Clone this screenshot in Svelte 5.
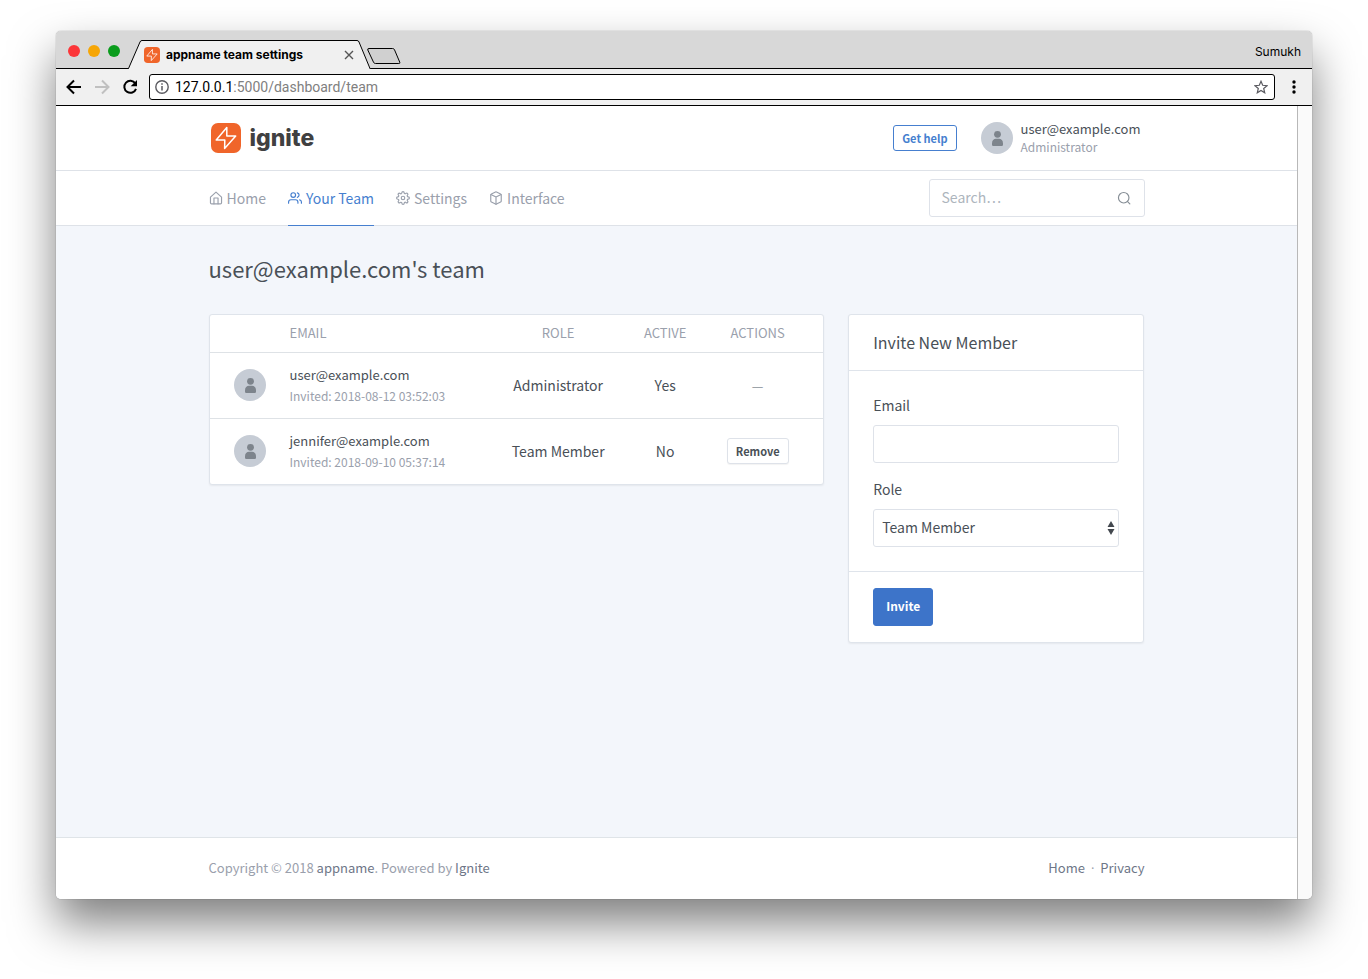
<script>
  const members = [
    { email: 'user@example.com', invited: '2018-08-12 03:52:03', role: 'Administrator', active: 'Yes', removable: false },
    { email: 'jennifer@example.com', invited: '2018-09-10 05:37:14', role: 'Team Member', active: 'No', removable: true }
  ];
  const nav = [
    { label: 'Home', icon: 'home' },
    { label: 'Your Team', icon: 'users', active: true },
    { label: 'Settings', icon: 'settings' },
    { label: 'Interface', icon: 'box' }
  ];
  let search = $state('');
  let email = $state('');
  let role = $state('Team Member');
</script>

{#snippet avatar()}
  <svg class="avatar" viewBox="0 0 32 32" aria-hidden="true">
    <circle cx="16" cy="16" r="16" fill="#c6ccd5" />
    <circle cx="16.5" cy="12.3" r="3.4" fill="#7d848c" />
    <path d="M11 21.500c0-3.200 1.800-4.700 4-4.700h3c2.200 0 4 1.500 4 4.700v1.300q0 1.300-1.300 1.300h-8.400q-1.300 0-1.300-1.300z" fill="#7d848c" />
  </svg>
{/snippet}

{#snippet logo(cls)}
  <svg class={cls} viewBox="0 0 30 30" aria-hidden="true">
    <rect width="30" height="30" rx="7" fill="#f0652a" />
    <path d="M15.800 4.500 5.200 17h8.600l-.2 8.500L24.700 13h-8.900z" fill="none" stroke="#fff" stroke-width="1.500" stroke-linejoin="round" />
  </svg>
{/snippet}

<div class="window">
  <div class="tabstrip">
    <div class="lights"><span class="red"></span><span class="amber"></span><span class="green"></span></div>
    <div class="tab">
      <svg class="tab-shape" viewBox="0 0 243 29" aria-hidden="true">
        <path d="M0 29 .500 28.500 12 2q.500-1.500 2-1.500H229q1.500 0 2 1.500l11 26.500.500.500" fill="#f0f0f0" stroke="#000" />
      </svg>
      {@render logo('favicon')}
      <span class="tab-title">appname team settings</span>
      <button class="tab-close" aria-label="Close tab">
        <svg width="10" height="10" viewBox="0 0 10 10"><path d="M1 1l8 8M9 1 1 9" stroke="#555" stroke-width="1.400" /></svg>
      </button>
    </div>
    <button class="new-tab" aria-label="New tab">
      <svg width="34" height="17" viewBox="0 0 34 17"><path d="M2 .500h23.500q1.500 0 2 1.300l5.300 12.500q.500 1.200-1 1.200H8.500q-1.500 0-2-1.300L.800 2Q.300.500 2 .500z" fill="#d0d0d0" stroke="#000" /></svg>
    </button>
    <span class="profile">Sumukh</span>
  </div>

  <div class="toolbar">
    <button aria-label="Back"><svg width="16" height="16" viewBox="0 0 16 16"><path d="M15 8H2M8 1.500 1.500 8 8 14.500" fill="none" stroke="#000" stroke-width="2" /></svg></button>
    <button aria-label="Forward"><svg width="16" height="16" viewBox="0 0 16 16"><path d="M1 8h13M8 1.500 14.500 8 8 14.500" fill="none" stroke="#c0c0c0" stroke-width="2" /></svg></button>
    <button aria-label="Reload"><svg width="16" height="16" viewBox="0 0 16 16"><path d="M13.300 4.400A6 6 0 1 0 14 9.800" fill="none" stroke="#000" stroke-width="2" /><path d="M15 1v6.300H8.700z" /></svg></button>
    <div class="address">
      <svg width="14" height="14" viewBox="0 0 14 14" aria-hidden="true"><circle cx="7" cy="7" r="6.200" fill="none" stroke="#5a5a60" stroke-width="1.400" /><path d="M7 6v4.500M7 3.300v1.500" stroke="#5a5a60" stroke-width="1.500" /></svg>
      <span class="url">127.0.0.1<span>:5000/dashboard/team</span></span>
      <svg width="14" height="14" viewBox="0 0 14 14" aria-hidden="true"><path d="M7 1.300l1.700 4 4.300.4-3.300 2.800 1 4.300L7 10.500l-3.700 2.300 1-4.300L1 5.700l4.300-.4z" fill="none" stroke="#5a5a60" stroke-width="1.200" /></svg>
    </div>
    <button aria-label="Menu"><svg width="4" height="14" viewBox="0 0 4 14"><circle cx="2" cy="2" r="1.700" /><circle cx="2" cy="7" r="1.700" /><circle cx="2" cy="12" r="1.700" /></svg></button>
  </div>

  <div class="viewport">
    <div class="page">
      <header class="bar top">
        <div class="container">
          <a class="brand" href="#home">{@render logo('brand-mark')}<span>ignite</span></a>
          <div class="account">
            <a class="btn small outline" href="#help">Get help</a>
            <a class="user" href="#account">
              {@render avatar()}
              <span class="user-text"><span>user@example.com</span><small>Administrator</small></span>
            </a>
          </div>
        </div>
      </header>

      <div class="bar menu">
        <div class="container">
          <nav>
            {#each nav as item}
              <a class:active={item.active} href="#{item.icon}">
                <svg class="icon" viewBox="0 0 24 24" aria-hidden="true">
                  {#if item.icon === 'home'}
                    <path d="M2.500 10.500 12 2l9.500 8.500V20a2 2 0 0 1-2 2h-15a2 2 0 0 1-2-2z" /><path d="M8.500 22V12h7v10" />
                  {:else if item.icon === 'users'}
                    <path d="M17 21v-2a4 4 0 0 0-4-4H5a4 4 0 0 0-4 4v2" /><circle cx="9" cy="7" r="4" /><path d="M23 21v-2a4 4 0 0 0-3-3.870M16 3.130a4 4 0 0 1 0 7.750" />
                  {:else if item.icon === 'settings'}
                    <circle cx="12" cy="12" r="3" /><path d="M19.400 15a1.650 1.650 0 0 0 .33 1.820l.06.06a2 2 0 0 1-2.830 2.830l-.06-.06a1.650 1.650 0 0 0-2.800 1.170V21a2 2 0 0 1-4 0v-.09A1.650 1.650 0 0 0 9 19.400a1.650 1.650 0 0 0-1.820.33l-.06.06a2 2 0 0 1-2.830-2.830l.06-.06a1.650 1.650 0 0 0-1.170-2.800H3a2 2 0 0 1 0-4h.09A1.650 1.650 0 0 0 4.600 9a1.650 1.650 0 0 0-.33-1.820l-.06-.06a2 2 0 0 1 2.830-2.830l.06.06A1.650 1.650 0 0 0 9 4.600 1.650 1.650 0 0 0 10 3.090V3a2 2 0 0 1 4 0v.09a1.650 1.650 0 0 0 2.820 1.170l.06-.06a2 2 0 0 1 2.830 2.830l-.06.06A1.650 1.650 0 0 0 19.400 9a1.650 1.650 0 0 0 1.510 1H21a2 2 0 0 1 0 4h-.09a1.650 1.650 0 0 0-1.510 1z" />
                  {:else}
                    <path d="M12.900 1.600l7 3.500A2 2 0 0 1 21 6.900v10.200a2 2 0 0 1-1.100 1.800l-7 3.500a2 2 0 0 1-1.800 0l-7-3.500A2 2 0 0 1 3 17.100V6.900a2 2 0 0 1 1.100-1.800l7-3.500a2 2 0 0 1 1.800 0z" /><path d="M3.300 6 12 10.400 20.700 6M12 22.500V10.400" />
                  {/if}
                </svg>
                {item.label}
              </a>
            {/each}
          </nav>
          <label class="search">
            <input type="search" placeholder="Search…" aria-label="Search" bind:value={search} />
            <svg class="icon" viewBox="0 0 24 24" aria-hidden="true"><circle cx="11.500" cy="11.500" r="9" /><path d="M22 22l-4.200-4.200" /></svg>
          </label>
        </div>
      </div>

      <main class="container">
        <h1>user@example.com's team</h1>
        <div class="columns">
          <section class="card">
            <table>
              <colgroup><col class="c-avatar" /><col /><col class="c-role" /><col class="c-active" /><col class="c-actions" /></colgroup>
              <thead>
                <tr><th></th><th class="left">Email</th><th>Role</th><th>Active</th><th>Actions</th></tr>
              </thead>
              <tbody>
                {#each members as m}
                  <tr>
                    <td>{@render avatar()}</td>
                    <td class="left"><div>{m.email}</div><small>Invited: {m.invited}</small></td>
                    <td>{m.role}</td>
                    <td>{m.active}</td>
                    <td>{#if m.removable}<button class="btn small plain">Remove</button>{:else}<span class="dash">—</span>{/if}</td>
                  </tr>
                {/each}
              </tbody>
            </table>
          </section>

          <form class="card invite" onsubmit={(e) => e.preventDefault()}>
            <h2>Invite New Member</h2>
            <div class="fields">
              <label for="email">Email</label>
              <input id="email" type="email" bind:value={email} />
              <label for="role">Role</label>
              <div class="select">
                <select id="role" bind:value={role}><option>Team Member</option><option>Administrator</option></select>
                <svg width="8" height="14" viewBox="0 0 8 14" aria-hidden="true"><path d="M4 0l3.500 6h-7zM4 14 .500 8h7z" fill="#43484f" /></svg>
              </div>
            </div>
            <div class="submit"><button class="btn primary">Invite</button></div>
          </form>
        </div>
      </main>

      <footer>
        <div class="container">
          <span>Copyright © 2018 <a href="#app">appname</a>. Powered by <a href="#ignite">Ignite</a></span>
          <span class="links"><a href="#home">Home</a><span class="dot">·</span><a href="#privacy">Privacy</a></span>
        </div>
      </footer>
    </div>
    <div class="scrollbar"></div>
  </div>
</div>

<style>
  :global(body) { background: #fff; }
  :global(#app) { overflow: hidden; }
  * { box-sizing: border-box; }
  a { color: inherit; text-decoration: none; }
  button { font: inherit; margin: 0; cursor: pointer; }
  svg { display: block; flex: none; }

  .window {
    display: flex;
    flex-direction: column;
    min-height: calc(100vh - 111px);
    margin: 31px 56px 80px;
    border-radius: 5px;
    overflow: hidden;
    background: #fff;
    box-shadow: 0 0 1px rgba(0, 0, 0, 0.6), 0 24px 46px rgba(0, 0, 0, 0.5);
    font: 14px/22px "Noto Sans CJK SC", "Open Sans", sans-serif;
    color: #495057;
  }

  .tabstrip {
    display: flex;
    align-items: flex-end;
    height: 38px;
    background: #d8d8d8;
    border-bottom: 1px solid #000;
    font-family: Inter, sans-serif;
    color: #000;
  }
  .lights { display: flex; gap: 8px; padding: 0 8px 11px 12px; }
  .lights span { width: 12px; height: 12px; border-radius: 50%; }
  .red { background: #fc3639; }
  .amber { background: #f6a606; }
  .green { background: #0a9c1c; }
  .tab {
    position: relative;
    display: flex;
    align-items: center;
    width: 243px;
    height: 29px;
    padding: 0 17px 0 16px;
    margin-bottom: -1px;
  }
  .tab-shape { position: absolute; inset: 0; width: 100%; height: 100%; }
  .favicon { position: relative; width: 16px; height: 16px; }
  .tab-title { position: relative; flex: 1; padding-left: 6px; font-size: 12px; font-weight: 700; white-space: nowrap; }
  .tab button, .new-tab, .toolbar button { border: 0; padding: 0; background: none; }
  .tab-close { position: relative; }
  .new-tab { margin: 0 0 3px -4px; }
  .profile { margin-left: auto; padding: 0 11px 5px; font-size: 12px; }

  .toolbar {
    display: flex;
    align-items: center;
    gap: 12px;
    height: 37px;
    padding: 0 16px 0 10px;
    background: #f0f0f0;
    border-bottom: 1px solid #000;
  }
  .address {
    flex: 1;
    display: flex;
    align-items: center;
    gap: 6px;
    height: 26px;
    margin: 0 5px 0 -1px;
    padding: 0 6px 0 5px;
    background: #fff;
    border: 1px solid #000;
    border-radius: 3px;
    font: 14px/22px Roboto, sans-serif;
    color: #000;
  }
  .url { flex: 1; }
  .url span { color: #808080; }

  .viewport { flex: 1; display: flex; }
  .page { flex: 1; display: flex; flex-direction: column; background: #f3f6fb; }
  .scrollbar { width: 15px; background: #fafafa; border-left: 1px solid #b8b8b8; }

  .container { width: 100%; max-width: 984px; margin: 0 auto; padding: 0 24px; }
  .bar { background: #fff; border-bottom: 1px solid #dee2e8; }
  .bar .container { display: flex; justify-content: space-between; align-items: center; }
  .top .container { height: 64px; }
  .menu .container { height: 54px; }

  .brand { display: flex; align-items: center; gap: 9px; padding-left: 2px; font: 800 23px/30px Inter, sans-serif; color: #404041; }
  .brand-mark { width: 30px; height: 30px; }
  .account { display: flex; align-items: center; gap: 24px; }
  .user { display: flex; align-items: center; gap: 8px; }
  .user-text { display: flex; flex-direction: column; min-width: 124px; font-size: 13px; line-height: 18px; }
  .avatar { width: 32px; height: 32px; }
  small { font-size: 12px; color: #9aa0ac; }

  nav { display: flex; gap: 22px; align-self: stretch; color: #9aa0ac; }
  nav a { display: flex; align-items: center; gap: 4px; margin-bottom: -1px; padding-bottom: 1px; border-bottom: 1px solid transparent; }
  nav a.active { color: #467fcf; border-color: #467fcf; }
  .icon { width: 14px; height: 14px; fill: none; stroke: currentColor; stroke-width: 2; stroke-linecap: round; stroke-linejoin: round; }

  input, select {
    width: 100%;
    height: 38px;
    margin: 0;
    border: 1px solid #dee2e9;
    border-radius: 3px;
    background: #fff;
    font: inherit;
    color: #495057;
    appearance: none;
    outline: none;
  }
  .search { display: grid; align-items: center; width: 216px; color: #868e96; }
  .search input, .search svg { grid-area: 1 / 1; }
  .search input { padding: 0 36px 2px 12px; }
  .search input::placeholder { color: #adb5bd; opacity: 1; }
  .search svg { justify-self: end; margin-right: 14px; }

  main { flex: 1; }
  h1 { margin: 26px 0 30px; font-size: 22px; line-height: 32px; font-weight: 400; }
  .columns { display: grid; grid-template-columns: minmax(0, 615fr) minmax(0, 296fr); gap: 24px; align-items: start; }
  .card { background: #fff; border: 1px solid #dfe4eb; border-radius: 3px; box-shadow: 0 1px 2px rgba(0, 0, 0, 0.06); }

  table { width: 100%; table-layout: fixed; border-collapse: collapse; text-align: center; }
  .c-avatar { width: 68px; }
  .c-role { width: 136px; }
  .c-active { width: 78px; }
  .c-actions { width: 119px; }
  th { height: 37px; padding: 0 12px; font-size: 13px; font-weight: 400; text-transform: uppercase; color: #9aa0ac; }
  td { height: 66px; padding: 0 12px; border-top: 1px solid #dee2e6; white-space: nowrap; }
  td:first-child { padding: 0 12px 0 24px; }
  th:last-child, td:last-child { padding: 0 24px 0 12px; }
  .left { text-align: left; }
  td.left { font-size: 13px; }
  td small { display: block; line-height: 20px; }
  .dash { color: #868e96; font-size: 13px; }

  .btn {
    display: inline-block;
    border: 1px solid transparent;
    border-radius: 3px;
    padding: 6px 12px 8px;
    font-size: 12px;
    font-weight: 700;
    line-height: 22px;
  }
  .small { padding: 3px 8px; font-size: 11px; line-height: 18px; }
  .outline { border-color: #467fcf; color: #467fcf; }
  .plain { background: #fff; border-color: #dee2e9; color: #495057; box-shadow: 0 1px 1px rgba(0, 0, 0, 0.05); }
  .primary { background: #3d74c9; border-color: #3d74c9; color: #fff; }

  h2 { margin: 0; padding: 16px 24px; font-size: 16px; line-height: 23px; font-weight: 400; border-bottom: 1px solid #dfe4eb; }
  .fields { padding: 23px 24px 24px; }
  .fields label { display: block; margin-bottom: 9px; }
  .fields input { display: block; margin-bottom: 15px; padding: 0 12px; }
  .select { display: grid; align-items: center; }
  .select select, .select svg { grid-area: 1 / 1; }
  .select select { padding: 0 24px 2px 8px; }
  .select svg { justify-self: end; margin-right: 4px; pointer-events: none; }
  .submit { padding: 16px 24px; border-top: 1px solid #dfe4eb; display: flex; }

  footer { background: #fff; border-top: 1px solid #dfe4e8; font-size: 13px; color: #9aa0ac; }
  footer .container { display: flex; align-items: center; justify-content: space-between; height: 61px; padding-bottom: 2px; }
  footer a { color: #6e7687; }
  .links { display: flex; gap: 6px; }
  .dot { font-family: "Open Sans", sans-serif; }
</style>
